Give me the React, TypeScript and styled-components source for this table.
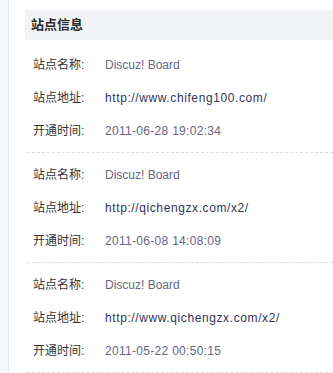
import React from 'react'
import styled, { createGlobalStyle } from 'styled-components'

const GlobalStyle = createGlobalStyle`
    html, body {
        margin: 0;
        padding: 0;
        background: #fff;
    }
    body {
        font-family: "Liberation Sans", "Noto Sans CJK SC", sans-serif;
        font-size: 12px;
        color: #333;
    }
`

const Page = styled.div`
    display: flex;
    min-height: 373px;
`

const SideStrip = styled.div`
    flex: 0 0 8px;
    background: #f6f7f9;
    border-right: 1px solid #e3e7ef;
`

const Main = styled.div`
    flex: 1 1 auto;
    padding: 10px 0 0 16px;
`

const Header = styled.h3`
    margin: 0;
    height: 30px;
    line-height: 30px;
    padding-left: 6px;
    background: #f2f3f7;
    font-size: 13px;
    font-weight: bold;
    color: #2b2b2b;
`

const Group = styled.div`
    margin: 3px 0 0 2px;
    padding: 6px 0 4px;
    border-bottom: 1px dashed #dcdcdc;

    & + & {
        margin-top: 0;
    }
`

const Row = styled.div`
    display: flex;
    height: 33px;
    line-height: 33px;
    padding-left: 6px;
`

const Label = styled.span`
    flex: 0 0 72px;
    color: #333;
`

type Kind = 'name' | 'url' | 'time'

interface ValueProps {
    kind: Kind
}

const spacing: Record<Kind, string> = {
    name: '0',
    url: '0.6px',
    time: '0.3px',
}

const Value = styled.span<ValueProps>`
    color: ${props => (props.kind === 'url' ? '#33335a' : '#66667f')};
    letter-spacing: ${props => spacing[props.kind]};
`

const sites = [
    { name: 'Discuz! Board', url: 'http://www.chifeng100.com/', time: '2011-06-28 19:02:34' },
    { name: 'Discuz! Board', url: 'http://qichengzx.com/x2/', time: '2011-06-08 14:08:09' },
    { name: 'Discuz! Board', url: 'http://www.qichengzx.com/x2/', time: '2011-05-22 00:50:15' },
]

const App = () => (
    <>
        <GlobalStyle />
        <Page>
            <SideStrip />
            <Main>
                <Header>站点信息</Header>
                {sites.map((site, i) => (
                    <Group key={`site-${i}`}>
                        <Row>
                            <Label>站点名称:</Label>
                            <Value kind="name">{site.name}</Value>
                        </Row>
                        <Row>
                            <Label>站点地址:</Label>
                            <Value kind="url">{site.url}</Value>
                        </Row>
                        <Row>
                            <Label>开通时间:</Label>
                            <Value kind="time">{site.time}</Value>
                        </Row>
                    </Group>
                ))}
            </Main>
        </Page>
    </>
)

export default App
